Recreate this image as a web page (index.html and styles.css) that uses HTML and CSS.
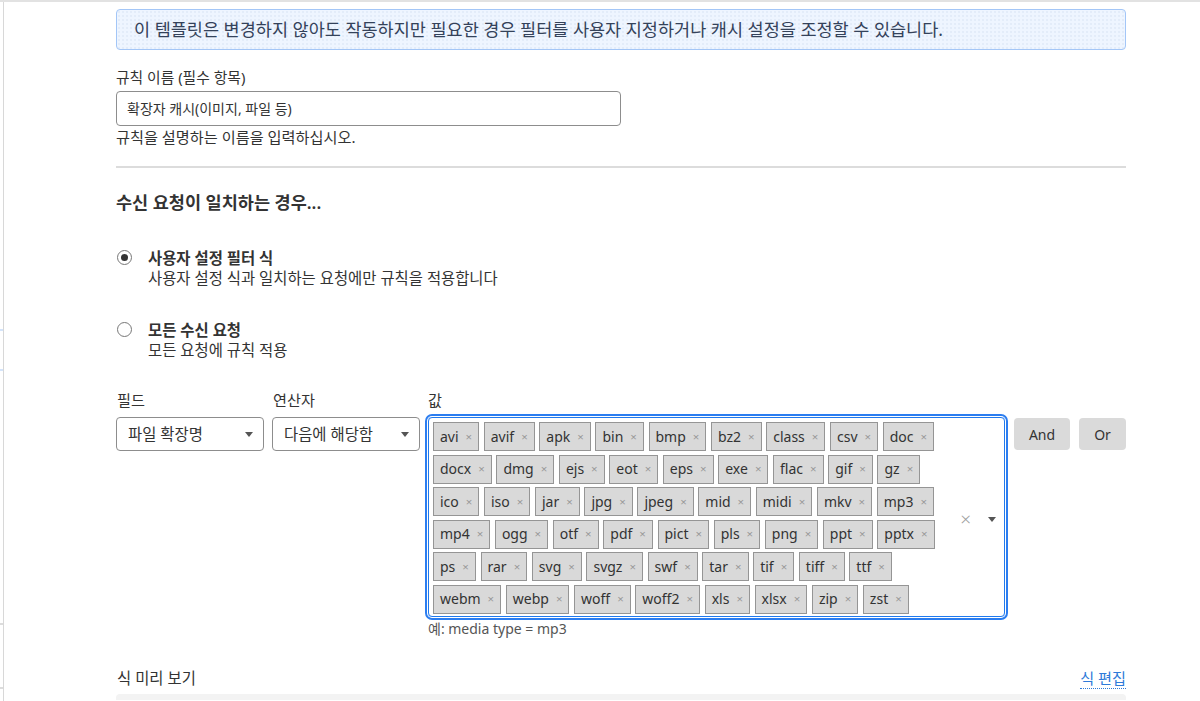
FILE: index.html
```html
<!DOCTYPE html>
<html lang="ko">
<head>
<meta charset="utf-8">
<title>규칙</title>
<link rel="stylesheet" href="styles.css">
</head>
<body>
<div class="frame">
  <div class="strip">
    <span class="sp s1"></span><span class="mark blue"></span>
    <span class="sp s2"></span><span class="mark blue"></span>
    <span class="sp s3"></span><span class="mark gray"></span>
    <span class="sp s4"></span><span class="mark gray"></span>
  </div>
  <main class="content">
    <div class="info">이 템플릿은 변경하지 않아도 작동하지만 필요한 경우 필터를 사용자 지정하거나 캐시 설정을 조정할 수 있습니다.</div>

    <div class="label first">규칙 이름 (필수 항목)</div>
    <div class="text-input">확장자 캐시(이미지, 파일 등)</div>
    <div class="help">규칙을 설명하는 이름을 입력하십시오.</div>

    <div class="rule"></div>

    <h2 class="heading">수신 요청이 일치하는 경우...</h2>

    <div class="option opt1">
      <span class="radio checked"></span>
      <div class="opt-text">
        <div class="opt-title">사용자 설정 필터 식</div>
        <div class="opt-desc">사용자 설정 식과 일치하는 요청에만 규칙을 적용합니다</div>
      </div>
    </div>
    <div class="option opt2">
      <span class="radio"></span>
      <div class="opt-text">
        <div class="opt-title">모든 수신 요청</div>
        <div class="opt-desc">모든 요청에 규칙 적용</div>
      </div>
    </div>

    <div class="expr">
      <div class="col col-field">
        <div class="label col-label">필드</div>
        <div class="select"><span>파일 확장명</span><span class="caret"></span></div>
      </div>
      <div class="col col-op">
        <div class="label col-label">연산자</div>
        <div class="select"><span>다음에 해당함</span><span class="caret"></span></div>
      </div>
      <div class="col col-val">
        <div class="label col-label">값</div>
        <div class="multi">
          <div class="tags">
            <div class="tag-row"><span class="tag">avi<i>×</i></span><span class="tag">avif<i>×</i></span><span class="tag">apk<i>×</i></span><span class="tag">bin<i>×</i></span><span class="tag">bmp<i>×</i></span><span class="tag">bz2<i>×</i></span><span class="tag">class<i>×</i></span><span class="tag">csv<i>×</i></span><span class="tag">doc<i>×</i></span></div>
            <div class="tag-row"><span class="tag">docx<i>×</i></span><span class="tag">dmg<i>×</i></span><span class="tag">ejs<i>×</i></span><span class="tag">eot<i>×</i></span><span class="tag">eps<i>×</i></span><span class="tag">exe<i>×</i></span><span class="tag">flac<i>×</i></span><span class="tag">gif<i>×</i></span><span class="tag">gz<i>×</i></span></div>
            <div class="tag-row"><span class="tag">ico<i>×</i></span><span class="tag">iso<i>×</i></span><span class="tag">jar<i>×</i></span><span class="tag">jpg<i>×</i></span><span class="tag">jpeg<i>×</i></span><span class="tag">mid<i>×</i></span><span class="tag">midi<i>×</i></span><span class="tag">mkv<i>×</i></span><span class="tag">mp3<i>×</i></span></div>
            <div class="tag-row"><span class="tag">mp4<i>×</i></span><span class="tag">ogg<i>×</i></span><span class="tag">otf<i>×</i></span><span class="tag">pdf<i>×</i></span><span class="tag">pict<i>×</i></span><span class="tag">pls<i>×</i></span><span class="tag">png<i>×</i></span><span class="tag">ppt<i>×</i></span><span class="tag">pptx<i>×</i></span></div>
            <div class="tag-row"><span class="tag">ps<i>×</i></span><span class="tag">rar<i>×</i></span><span class="tag">svg<i>×</i></span><span class="tag">svgz<i>×</i></span><span class="tag">swf<i>×</i></span><span class="tag">tar<i>×</i></span><span class="tag">tif<i>×</i></span><span class="tag">tiff<i>×</i></span><span class="tag">ttf<i>×</i></span></div>
            <div class="tag-row"><span class="tag">webm<i>×</i></span><span class="tag">webp<i>×</i></span><span class="tag">woff<i>×</i></span><span class="tag">woff2<i>×</i></span><span class="tag">xls<i>×</i></span><span class="tag">xlsx<i>×</i></span><span class="tag">zip<i>×</i></span><span class="tag">zst<i>×</i></span></div>
          </div>
          <div class="indicators">
            <span class="clear">×</span>
            <span class="caret"></span>
          </div>
        </div>
        <div class="example">예: media type = mp3</div>
      </div>
      <div class="col col-btn">
        <div class="label col-label">&nbsp;</div>
        <div class="buttons">
          <span class="btn btn-and">And</span>
          <span class="btn btn-or">Or</span>
        </div>
      </div>
    </div>

    <div class="preview-head">
      <span class="preview-label">식 미리 보기</span>
      <a class="edit-link" href="#">식 편집</a>
    </div>
    <div class="preview-box"></div>
  </main>
</div>
</body>
</html>
```

FILE: styles.css
```css
* { box-sizing: border-box; }
html, body { margin: 0; padding: 0; background: #fff; }
body {
  font-family: "Noto Sans", "Noto Sans CJK KR", sans-serif;
  color: #333;
  font-size: 14px;
  line-height: 20px;
  width: 1200px;
  height: 701px;
  overflow: hidden;
}
.frame {
  display: flex;
  height: 701px;
  border-top: 2px solid #e2e2e2;
  overflow: hidden;
}
.strip {
  width: 3px;
  display: flex;
  flex-direction: column;
  flex: none;
}
.strip .sp { display: block; }
.s1 { height: 327px; }
.s2 { height: 38px; }
.s3 { height: 252px; }
.s4 { height: 62px; }
.mark { display: block; height: 2px; }
.mark.blue { background: #d4e4fa; }
.mark.gray { background: #dcdcdc; }

.content {
  border-left: 1px solid #d8d8d8;
  padding-left: 112px;
  width: 1123px;
  flex: none;
}
.info {
  margin-top: 7px;
  width: 1010px;
  height: 41px;
  border: 1px solid #a3c6f7;
  border-radius: 4px;
  background-color: #eef5ff;
  background-image: radial-gradient(circle, #dde8f6 0.6px, transparent 0.9px);
  background-size: 4px 4px;
  color: #34425a;
  font-size: 17.5px;
  line-height: 39px;
  padding: 0 17px;
  white-space: nowrap;
}
.label { line-height: 20px; font-size: 14.3px; color: #333; }
.label.first { margin-top: 17px; margin-bottom: -1px; font-size: 14.8px; }
.text-input {
  margin-top: 5px;
  width: 505px;
  height: 35px;
  border: 1px solid #8d8d8d;
  border-radius: 4px;
  padding: 0 10px;
  line-height: 33px;
  font-size: 14px;
  color: #333;
}
.help { margin-top: 1px; line-height: 20px; color: #333; font-size: 15.2px; }
.rule {
  margin-top: 19px;
  width: 1010px;
  height: 2px;
  background: #dcdcdc;
}
.heading {
  margin: 23px 0 0;
  font-size: 17.5px;
  line-height: 22px;
  font-weight: 600;
  color: #333;
}
.option { display: flex; align-items: flex-start; gap: 16px; }
.opt1 { margin-top: 34px; }
.opt2 { margin-top: 30px; }
.opt-text { padding-top: 2px; }
.radio {
  width: 15px;
  height: 15px;
  border: 1px solid #777;
  border-radius: 50%;
  margin: 3px 0 0 1px;
  display: flex;
  align-items: center;
  justify-content: center;
  flex: none;
  background: #fff;
}
.radio.checked::after {
  content: "";
  width: 7px;
  height: 7px;
  border-radius: 50%;
  background: #333;
}
.opt-title { font-weight: 700; line-height: 20px; color: #333; font-size: 15.4px; }
.opt-desc { line-height: 20px; color: #333; font-size: 15.4px; }

.expr {
  margin-top: 27px;
  display: flex;
  width: 1010px;
  align-items: flex-start;
}
.col .col-label { margin-left: 1px; font-size: 15.2px; padding-top: 2px; }
.col-field { width: 148px; }
.col-op { width: 148px; margin-left: 8px; }
.col-val { width: 577px; margin-left: 8px; }
.col-val .col-label { margin-left: 0; }
.col-btn { margin-left: 9px; }
.select {
  margin-top: 7px;
  height: 34px;
  border: 1px solid #8d8d8d;
  border-radius: 4px;
  display: flex;
  align-items: center;
  justify-content: space-between;
  padding: 1px 10px 0 11px;
  font-size: 15.4px;
  color: #333;
}
.caret {
  width: 0;
  height: 0;
  border-left: 4.5px solid transparent;
  border-right: 4.5px solid transparent;
  border-top: 5px solid #555;
}
.multi {
  margin-top: 7px;
  height: 200px;
  border: 1px solid #1f79ee;
  border-radius: 4px;
  box-shadow: 0 0 0 1px #fff, 0 0 0 3px #2b7df0;
  display: flex;
  align-items: center;
  padding: 4px 8px 2px 4px;
}
.tags {
  flex: 1;
  align-self: flex-start;
  display: flex;
  flex-direction: column;
  gap: 3.6px;
}
.tag-row { display: flex; gap: 4.6px; }
.tag {
  height: 29px;
  display: inline-flex;
  align-items: center;
  background: #d9d9d9;
  border: 1px solid #959595;
  padding: 0 6px 0 6px;
  font-size: 14px;
  color: #333;
  line-height: 20px;
}
.tag i {
  font-style: normal;
  font-size: 11.5px;
  color: #999;
  margin-left: 7px;
  line-height: 14px;
}
.indicators {
  display: flex;
  align-items: center;
  gap: 17px;
  padding-top: 2px;
}
.clear {
  font-size: 19px;
  color: #a0a0a0;
  line-height: 20px;
  font-weight: 300;
}
.example {
  margin-top: 2px;
  line-height: 20px;
  font-size: 14px;
  color: #555;
}
.buttons { display: flex; gap: 9px; margin-top: 8px; }
.btn {
  height: 32px;
  border-radius: 4px;
  background: #dadada;
  display: flex;
  align-items: center;
  justify-content: center;
  padding-top: 2px;
  font-size: 14px;
  color: #333;
}
.btn-and { width: 56px; }
.btn-or { width: 47px; }

.preview-head {
  margin-top: 29px;
  width: 1010px;
  display: flex;
  justify-content: space-between;
  align-items: center;
  line-height: 20px;
  padding-top: 1px;
}
.preview-label { margin-left: 1px; color: #333; font-size: 15.4px; }
.edit-link {
  color: #2f7bd9;
  text-decoration: none;
  border-bottom: 1px dotted #2f7bd9;
  line-height: 19px;
  font-size: 15.2px;
}
.preview-box {
  margin-top: 5px;
  width: 1010px;
  height: 6px;
  background: #f3f3f3;
  border-radius: 4px 4px 0 0;
}
```
